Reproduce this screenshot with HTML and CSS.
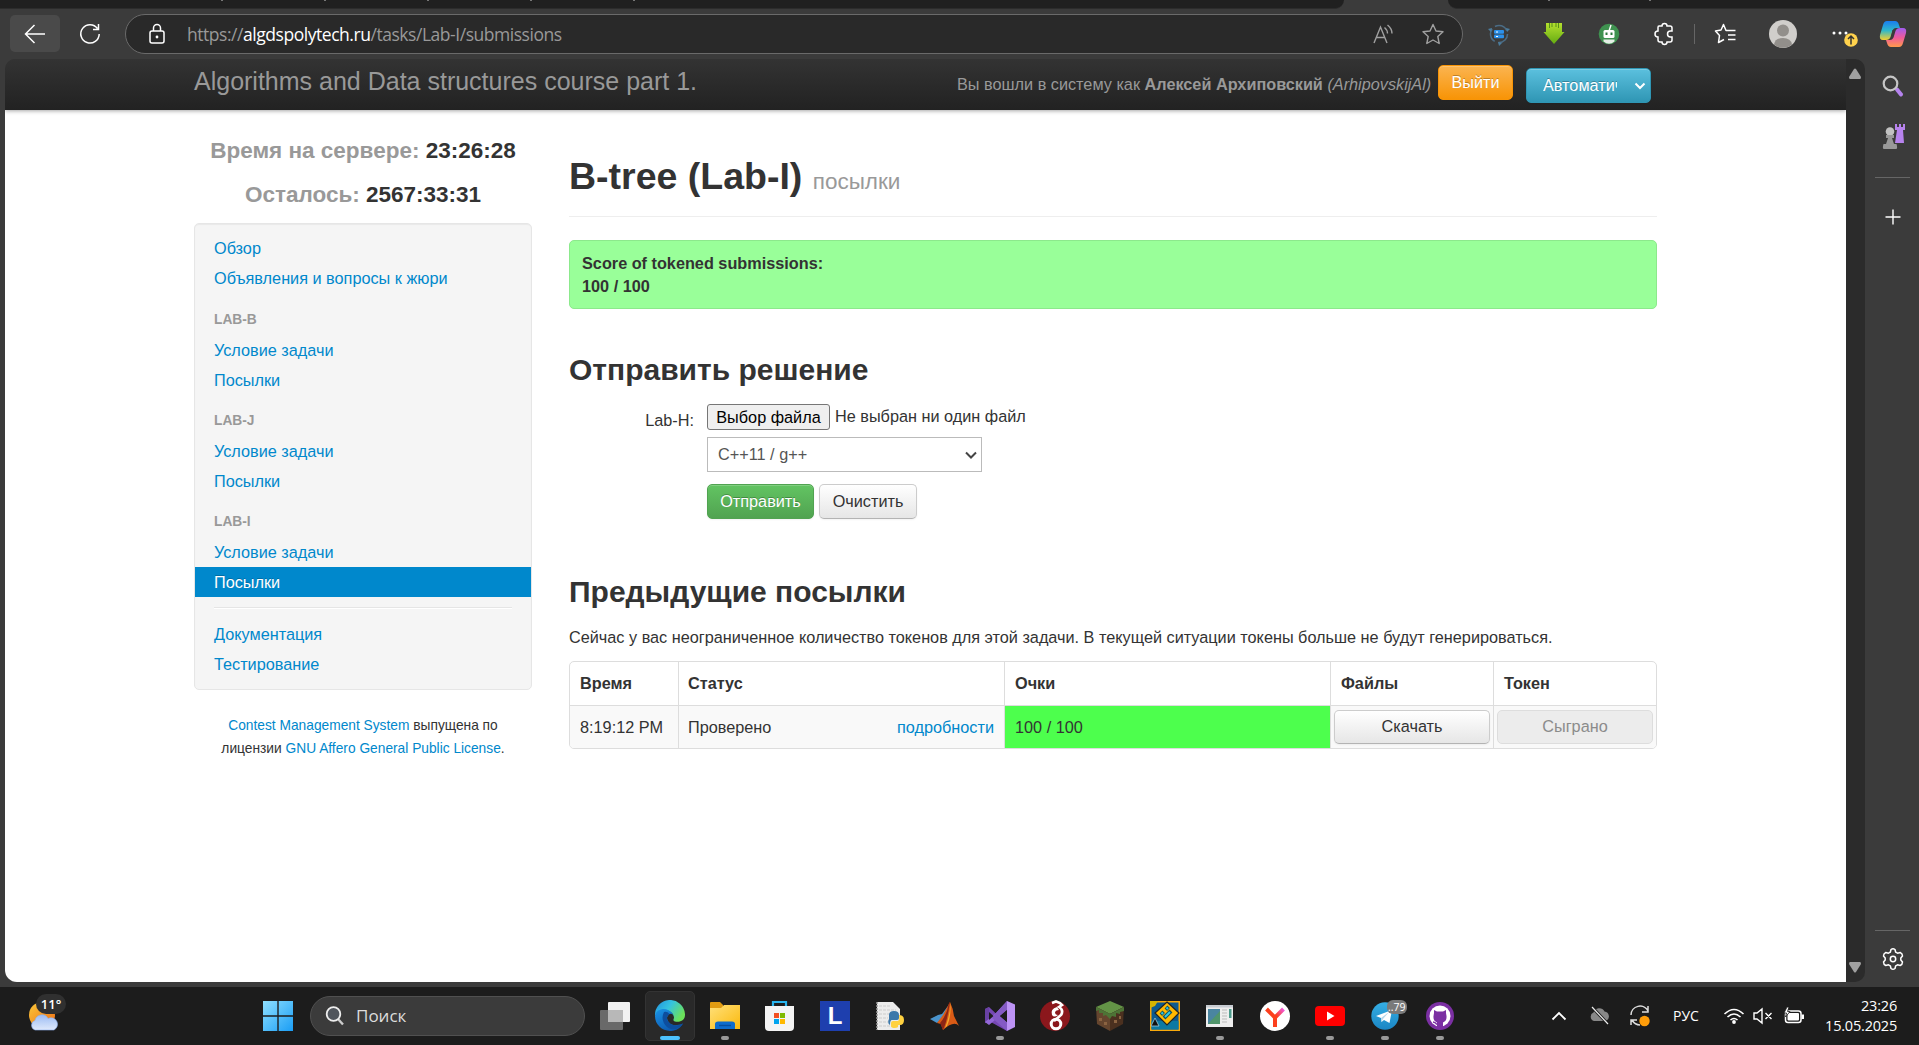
FILE: index.html
```html
<!DOCTYPE html>
<html lang="ru">
<head>
<meta charset="utf-8">
<title>B-tree (Lab-I)</title>
<link rel="stylesheet" href="styles.css">
</head>
<body>
<svg width="0" height="0" class="defs"><defs>
<linearGradient id="gWin" x1="0" y1="0" x2="1" y2="1"><stop offset="0" stop-color="#8fe0ff"/><stop offset="1" stop-color="#1a9df5"/></linearGradient>
<linearGradient id="gEdge" x1="0" y1="0" x2="1" y2=".5"><stop offset="0" stop-color="#1f8fe0"/><stop offset=".5" stop-color="#35c3e0"/><stop offset="1" stop-color="#6be15a"/></linearGradient>
<linearGradient id="gEdgeB" x1="0" y1="0" x2=".6" y2="1"><stop offset="0" stop-color="#1a93e6"/><stop offset="1" stop-color="#0c57ad"/></linearGradient>
<linearGradient id="gFold" x1="0" y1="0" x2="1" y2="1"><stop offset="0" stop-color="#ffe07a"/><stop offset="1" stop-color="#fbb90c"/></linearGradient>
<linearGradient id="gCoA" x1="0" y1="0" x2="0" y2="1"><stop offset="0" stop-color="#1a7df0"/><stop offset=".5" stop-color="#2fb8c9"/><stop offset="1" stop-color="#f5cf2e"/></linearGradient>
<linearGradient id="gCoB" x1="0" y1="0" x2="0" y2="1"><stop offset="0" stop-color="#a05cf0"/><stop offset=".5" stop-color="#ee5a9c"/><stop offset="1" stop-color="#ff9a4a"/></linearGradient>
<linearGradient id="gGreen" x1="0" y1="0" x2="0" y2="1"><stop offset="0" stop-color="#b4e02e"/><stop offset="1" stop-color="#64ab12"/></linearGradient>
<linearGradient id="gSun" x1="0" y1="0" x2="1" y2="1"><stop offset="0" stop-color="#fbc93a"/><stop offset="1" stop-color="#ee6a14"/></linearGradient>
<linearGradient id="gCloud" x1="0" y1="0" x2="0" y2="1"><stop offset="0" stop-color="#9cbcf4"/><stop offset="1" stop-color="#dfe9fb"/></linearGradient>
<linearGradient id="gTg" x1="0" y1="0" x2="0" y2="1"><stop offset="0" stop-color="#35aee4"/><stop offset="1" stop-color="#1b86c4"/></linearGradient>
<linearGradient id="gYa" x1="0" y1="1" x2="1" y2="0"><stop offset="0" stop-color="#fc3f1d"/><stop offset=".6" stop-color="#fc3f1d"/><stop offset="1" stop-color="#f05ae0"/></linearGradient>
</defs></svg>

<div class="tabstrip"><div class="tabs-left"><i></i><i></i><i></i><i></i><i></i></div><div class="tab-active"></div><div class="tabs-right"><i></i><i></i></div></div>

<header class="toolbar">
  <div class="back"><svg width="24" height="24" viewBox="0 0 24 24"><path d="M22 12H2.500M11.500 3L2.500 12L11.500 21" fill="none" stroke="#fff" stroke-width="1.500"/></svg></div>
  <svg class="reload" width="24" height="24" viewBox="0 0 24 24"><path d="M19.500 6.500A9.200 9.200 0 1 0 21.200 12M20.500 2V7.500H15" fill="none" stroke="#fff" stroke-width="1.500"/></svg>
  <div class="address">
    <svg class="lock" width="20" height="22" viewBox="0 0 20 22"><rect x="3" y="8" width="14" height="12" rx="2" fill="none" stroke="#fff" stroke-width="1.500"/><path d="M6.500 8V5a3.500 3.500 0 0 1 7 0V8" fill="none" stroke="#fff" stroke-width="1.500"/><circle cx="10" cy="14" r="1.400" fill="#fff"/></svg>
    <span class="url">https://<b>algdspolytech.ru</b>/tasks/Lab-I/submissions</span>
    <svg class="read" width="24" height="22" viewBox="0 0 24 22"><path d="M2 20L8.500 4L15 20M4.500 14.500H12.500M12.500 4.500Q15.500 7 15.500 10.500M15.500 2Q20 5.500 20 10.500" fill="none" stroke="#a0a0a0" stroke-width="1.400"/></svg>
    <svg class="star" width="24" height="22" viewBox="0 0 24 22"><path d="M12 1.500L15 8L22 8.800L16.800 13.500L18.200 20.500L12 17L5.800 20.500L7.200 13.500L2 8.800L9 8Z" fill="none" stroke="#a0a0a0" stroke-width="1.400" stroke-linejoin="round"/></svg>
  </div>
  <div class="extensions">
    <svg width="24" height="24" viewBox="0 0 24 24"><circle cx="12" cy="12" r="8.500" fill="none" stroke="#4b6c85" stroke-width="1.600" stroke-dasharray="14 3.800"/><path d="M1 7L5 6L4 10ZM23 7L19 6L20 10ZM11 20L15 21L12 24Z" fill="#4b7d9e"/><rect x="7" y="8" width="10" height="3.700" rx="1" fill="#2b91ec"/><rect x="7" y="12.500" width="10" height="3.700" rx="1" fill="#2b91ec"/><path d="M9 10H11M9 14.500H11" stroke="#fff"/></svg>
    <svg width="24" height="24" viewBox="0 0 24 24"><path d="M4 1H20V10H22.500L12 22L1.500 10H4Z" fill="url(#gGreen)"/><path d="M7.500 1V6M10 1V5M14 1V5M16.500 1V6" stroke="#558f18"/></svg>
    <svg width="24" height="24" viewBox="0 0 24 24"><circle cx="12" cy="12" r="10.300" fill="#3f9250"/><path d="M12 9L14 3" stroke="#fff" stroke-width="1.400"/><rect x="6.500" y="8" width="11" height="8" rx="1.500" fill="#fff"/><rect x="8.500" y="10.500" width="2" height="2.500" fill="#2d7b3e"/><rect x="13.500" y="10.500" width="2" height="2.500" fill="#2d7b3e"/><path d="M6.500 17.500H17.500V19.500Q12 24 6.500 19.500Z" fill="#e6eee7"/></svg>
    <svg width="24" height="24" viewBox="0 0 24 24"><path d="M7 4H10A2.500 2.500 0 0 1 15 4H18Q20 4 20 6V9H18.500A2.800 2.800 0 0 0 18.500 15H20V18Q20 20 18 20H15A2.500 2.500 0 0 1 10 20H8Q6 20 6 18V15A3 3 0 0 1 6 9V5.500Q6 4 7 4Z" fill="none" stroke="#fff" stroke-width="1.500"/></svg>
    <i class="sep"></i>
    <svg width="24" height="24" viewBox="0 0 24 24"><path d="M13 8.500H12L9.500 2.500L7 8L1.500 9L5.500 13.500L4.500 20.500L10 17.500M12.500 8.500H21.500M14 13H21.500M14 17.500H21.500" fill="none" stroke="#fff" stroke-width="1.500" stroke-linejoin="round"/></svg>
    <svg class="avatar" width="28" height="28" viewBox="0 0 28 28"><circle cx="14" cy="14" r="14" fill="#d0cecb"/><circle cx="14" cy="10.500" r="6" fill="#928f8b"/><path d="M5 24.500Q6 18 14 18T23 24.500A14 14 0 0 1 5 24.500" fill="#928f8b"/></svg>
    <svg class="more" width="28" height="28" viewBox="0 0 28 28"><circle cx="3" cy="13" r="1.500" fill="#fff"/><circle cx="9" cy="13" r="1.500" fill="#fff"/><circle cx="15" cy="13" r="1.500" fill="#fff"/><circle cx="20" cy="20" r="6.800" fill="#ffd24d"/><path d="M20 24.500V16.500M17 19L20 16L23 19" fill="none" stroke="#333" stroke-width="1.500"/></svg>
    <svg class="copilot" width="28" height="28" viewBox="0 0 28 28"><path d="M8 1H16Q19 1 20 5L21 8H17Q14 8 13 12L11.500 17Q10.500 20 7 20H4Q0 20 1 15L4 5Q5 1 8 1Z" fill="url(#gCoA)"/><path d="M20 27H12Q9 27 8 23L7 20H11Q14 20 15 16L16.500 11Q17.500 8 21 8H24Q28 8 27 13L24 23Q23 27 20 27Z" fill="url(#gCoB)"/><path d="M13.500 10L15.500 10L14 17L12 18Z" fill="#3b3b3b"/></svg>
  </div>
</header>

<div class="window">
  <div class="page">
    <nav class="navbar">
      <span class="brand">Algorithms and Data structures course part 1.</span>
      <span class="login">Вы вошли в систему как <strong>Алексей Архиповский</strong> <em>(ArhipovskijAl)</em></span>
      <a class="btn warning">Выйти</a>
      <span class="btn info"><span>Автоматич</span><svg width="12" height="8" viewBox="0 0 12 8"><path d="M1.500 1.500L6 6L10.500 1.500" fill="none" stroke="#fff" stroke-width="2"/></svg></span>
    </nav>
    <div class="container">
      <aside>
        <p class="clock"><span>Время на сервере:</span> 23:26:28</p>
        <p class="clock"><span>Осталось:</span> 2567:33:31</p>
        <ul class="well">
          <li>Обзор</li><li>Объявления и вопросы к жюри</li>
          <li class="head">LAB-B</li><li>Условие задачи</li><li>Посылки</li>
          <li class="head">LAB-J</li><li>Условие задачи</li><li>Посылки</li>
          <li class="head">LAB-I</li><li>Условие задачи</li><li class="active">Посылки</li>
          <li class="divider"></li>
          <li>Документация</li><li>Тестирование</li>
        </ul>
        <p class="credits"><a>Contest Management System</a> выпущена по<br>лицензии <a>GNU Affero General Public License</a>.</p>
      </aside>
      <main>
        <h1>B-tree (Lab-I) <small>посылки</small></h1>
        <div class="score">Score of tokened submissions:<br>100 / 100</div>
        <h2>Отправить решение</h2>
        <form class="submit">
          <label>Lab-H:</label>
          <div class="fields">
            <div class="file"><span class="choose">Выбор файла</span><span class="none">Не выбран ни один файл</span></div>
            <div class="select"><span>C++11 / g++</span><svg width="12" height="8" viewBox="0 0 12 8"><path d="M1 1.500L6 6.500L11 1.500" fill="none" stroke="#444" stroke-width="2"/></svg></div>
            <div class="actions"><span class="btn success">Отправить</span><span class="btn plain">Очистить</span></div>
          </div>
        </form>
        <h2 class="prev">Предыдущие посылки</h2>
        <p class="tokens">Сейчас у вас неограниченное количество токенов для этой задачи. В текущей ситуации токены больше не будут генерироваться.</p>
        <div class="table">
          <div class="row th"><div>Время</div><div>Статус</div><div>Очки</div><div>Файлы</div><div>Токен</div></div>
          <div class="row td"><div>8:19:12 PM</div><div class="status">Проверено<a>подробности</a></div><div class="full">100 / 100</div><div class="cell-btn"><span class="btn plain">Скачать</span></div><div class="cell-btn"><span class="btn disabled">Сыграно</span></div></div>
        </div>
      </main>
    </div>
  </div>
  <div class="scroll"><svg width="14" height="11" viewBox="0 0 14 11"><path d="M6 1Q7 0 8 1L13 9Q13 11 12 11H2Q1 11 1 9Z" fill="#a0a0a0"/></svg><svg width="14" height="11" viewBox="0 0 14 11"><path d="M6 10Q7 11 8 10L13 2Q13 0 12 0H2Q1 0 1 2Z" fill="#a0a0a0"/></svg></div>
  <div class="rail">
    <svg width="24" height="24" viewBox="0 0 24 24"><path d="M16 15.500L20 20.500" stroke="#b583ee" stroke-width="4" stroke-linecap="round"/><circle cx="9.500" cy="9.500" r="6.800" fill="#3b3b3b" stroke="#c5c5c5" stroke-width="2.200"/></svg>
    <svg class="chess" width="24" height="26" viewBox="0 0 24 26"><path d="M14 0H16V3H18V0H20V3H22V0H24V6H22L23 19H14L16 6H14Z" fill="#b783ee"/><circle cx="9" cy="7.500" r="4.300" fill="#c2c2c2"/><path d="M5 11H13V14H11L13 20H15.500Q17 25 15 25H3Q1 25 2.500 20H5L7 14H5Z" fill="#999"/></svg>
    <i></i>
    <svg class="plus" width="16" height="16" viewBox="0 0 16 16"><path d="M8 .5V15.500M.5 8H15.500" stroke="#fff" stroke-width="1.400"/></svg>
    <i class="low"></i>
    <svg class="gear" width="24" height="24" viewBox="0 0 24 24"><path d="M10 2.500Q12 1 14 2.500L14.700 5.200L16.500 6.200L19.200 5.500Q21.500 6.500 21.500 9L19.800 11V13L21.500 15Q21.500 17.500 19.200 18.500L16.500 17.800L14.700 18.800L14 21.500Q12 23 10 21.500L9.300 18.800L7.500 17.800L4.800 18.500Q2.500 17.500 2.500 15L4.200 13V11L2.500 9Q2.500 6.500 4.800 5.500L7.500 6.200L9.300 5.200Z" fill="none" stroke="#fff" stroke-width="1.500" stroke-linejoin="round"/><circle cx="12" cy="12" r="2.700" fill="none" stroke="#fff" stroke-width="1.500"/></svg>
  </div>
</div>

<footer class="taskbar">
  <div class="weather"><svg width="32" height="32" viewBox="0 0 32 32"><circle cx="14" cy="15" r="13" fill="url(#gSun)"/><path d="M7 30A5 5 0 0 1 7 20.500A7 7 0 0 1 20 18.500A6 6 0 0 1 26 30Z" fill="url(#gCloud)" stroke="#8db0ee" stroke-width=".6"/></svg><b>11°</b></div>
  <svg class="start" width="30" height="30" viewBox="0 0 30 30"><path d="M0 0H14.300V14.300H0ZM15.700 0H30V14.300H15.700ZM0 15.700H14.300V30H0ZM15.700 15.700H30V30H15.700Z" fill="url(#gWin)"/></svg>
  <div class="search"><svg width="20" height="20" viewBox="0 0 20 20"><path d="M13 13L18 18.500" stroke="#ccc" stroke-width="2.400"/><circle cx="8.500" cy="8" r="6.800" fill="#50555c" stroke="#eee" stroke-width="1.800"/></svg>Поиск</div>
  <div class="apps">
    <div><svg width="32" height="32" viewBox="0 0 32 32"><rect x="9" y="2" width="22" height="20" rx="1" fill="#f2f2f2"/><rect x="1" y="10" width="23" height="20" rx="1" fill="#777" fill-opacity=".85"/><rect x="9" y="10" width="15" height="12" fill="#b8b8b8"/></svg></div>
    <div class="on run"><svg width="32" height="32" viewBox="0 0 32 32"><path d="M1 16A15 15 0 0 1 31 14C31.500 21 25 22.500 21 21.500Q18.500 21 20 18C20 13 15 10 10 10Q4 10 1 16Z" fill="url(#gEdge)"/><path d="M1 16C2 9 10 8 14 10Q19 12 20 17Q19 13 15.500 14Q12 16 13.500 20Q16 26 23 25Q27 24.500 29 23.500C25 30 20 31 16 31A15 15 0 0 1 1 16Z" fill="url(#gEdgeB)"/><path d="M10 12Q6 20 13 27Q18 31 24 28Q28 26 29 23.500Q22 27 16.500 24Q10 19 15.500 14Q13 11 10 12Z" fill="#0d4e9e"/></svg></div>
    <div class="run"><svg width="32" height="32" viewBox="0 0 32 32"><path d="M1 3Q1 2 2 2H11L14 5V9H1Z" fill="#e09b12"/><path d="M1 8H12L15 5H31V29H1Z" fill="url(#gFold)"/><path d="M6 29V24Q6 21.500 9 21.500H23Q26 21.500 26 24V29Z" fill="#0d6ccc"/><path d="M10 25.500H22" stroke="#064e9e" stroke-width="1.400"/></svg></div>
    <div><svg width="32" height="32" viewBox="0 0 32 32"><path d="M9 7V2H22V7" fill="none" stroke="#28b4ee" stroke-width="2.200"/><path d="M1 6H30V27Q30 31 26 31H5Q1 31 1 27Z" fill="#f4f4f4"/><path d="M10 13H15V18H10Z" fill="#f25022"/><path d="M16 13H21V18H16Z" fill="#7fba00"/><path d="M10 19H15V24H10Z" fill="#00a4ef"/><path d="M16 19H21V24H16Z" fill="#ffb900"/></svg></div>
    <div class="ltile">L</div>
    <div><svg width="32" height="32" viewBox="0 0 32 32"><path d="M3 2H19L26 9V30H3Z" fill="#ececec"/><path d="M5 6H17M5 10H22M5 14H15M5 18H14M5 22H14M5 26H20" stroke="#ccc" stroke-dasharray="3 1"/><path d="M3 2V30" stroke="#999" stroke-width="1.500" stroke-dasharray="2 1"/><path d="M15 19V15Q15 11 20 11T25 15V18Q25 20 23 20H18Q16 20 16 25Q13 23 15 19Z" fill="#3c78aa"/><path d="M25 15Q30 15 30 20T26 25H24Q25 28 21 28T17 26V23Q17 21 19 21H23Q26 21 25 15Z" fill="#ffd140"/></svg></div>
    <div><svg width="32" height="32" viewBox="0 0 32 32"><path d="M1 19L9 15L13 14L19 6L16 17L8 23Z" fill="#4a94cc"/><path d="M8 23L14 15L21 2Q24 8 25 16L30 26Q25 20 14 30L12 24Z" fill="#d95b16"/><path d="M20 3Q18 15 11 23L14 30Q18 22 21 2Z" fill="#8c2515"/><path d="M21 2Q22 12 16 28L18 26Q23 14 21 2Z" fill="#f4ad2e"/></svg></div>
    <div class="run"><svg width="32" height="32" viewBox="0 0 32 32"><path d="M1 9L5 7L24 25L23 31L5 21L1 23Z" fill="#7548b2"/><path d="M1 9L5 7V24L1 22Z" fill="#6941a3"/><path d="M5 25L1 22L12 13L23 1V10Z" fill="#9468d8"/><path d="M12 13L23 1V10L16 16L23 22V31L8 18Z" fill="#845ac4"/><path d="M5 12V20L9.500 16Z" fill="#1c1c1c"/><path d="M23 10V22L16 16Z" fill="#1c1c1c"/><path d="M23 1L31 4.500V27L23 31Z" fill="#bd93f5"/></svg></div>
    <div><svg width="32" height="32" viewBox="0 0 32 32"><circle cx="16" cy="16" r="15" fill="#8b171c"/><circle cx="17" cy="24" r="4.800" fill="none" stroke="#fff" stroke-width="3"/><path d="M13 3L17 1.500L21 3L23 5L20 7Q25 10 22 15L15 21" fill="none" stroke="#fff" stroke-width="2.600"/><path d="M18 7Q11 9 13 15Q15 18 19 15Q16 15 16 12Q17 10 20 10Z" fill="#fff"/></svg></div>
    <div><svg width="32" height="32" viewBox="0 0 32 32"><path d="M16 1L30 7L16 14L2 7Z" fill="#639346"/><path d="M2 7L16 14V31L3 24Z" fill="#65452e"/><path d="M30 7L16 14V31L29 24Z" fill="#4b301f"/><path d="M2 7L16 14L30 7V11L26 12V14L22 13V17L18 16L16 19L12 15L9 16V13L5 13V10L2 11Z" fill="#4d7436"/><path d="M5 18h3v3H5M10 22h3v3h-3M20 20h3v3h-3M25 16h2v3h-2" fill="#8b6341"/></svg></div>
    <div><svg width="32" height="32" viewBox="0 0 32 32"><path d="M1 1H31V31H1Z" fill="#f9a90b"/><path d="M2.500 2.500H29.500V29.500H2.500Z" fill="#0e5b8e"/><path d="M2.500 21H29.500V29.500H2.500Z" fill="#0d79a3"/><path d="M1 1H9L6 6L1 8Z" fill="#d6b400"/><path d="M18 2L30 13L18 25L6 13Z" fill="#ffb900" stroke="#222" stroke-width="1.200"/><path d="M12 12L14.500 14.500M17 7L19.500 9.500M15 18L22 11" stroke="#16505e" stroke-width="4"/><path d="M12.500 12.500L14 14M17.500 7.500L19 9M16 17L21 12" stroke="#2ac8e6" stroke-width="2"/><path d="M2 26L6 18L10 26Z" fill="#111" stroke="#9ccbe0" stroke-width=".8"/></svg></div>
    <div class="run"><svg width="32" height="32" viewBox="0 0 32 32"><path d="M2 5H29V27H2Z" fill="#eee"/><path d="M2 5H29V7.500H2Z" fill="#c8ccd2"/><path d="M4 9H16V24H4Z" fill="#4a85a0"/><path d="M16 11V24H4Z" fill="#50956b"/><path d="M18 10H23M18 13H23M18 16H23M18 19H23M18 22H23" stroke="#bbb"/><path d="M25 9H27.500V18H25Z" fill="#4c9c8c"/></svg></div>
    <div><svg width="32" height="32" viewBox="0 0 32 32"><circle cx="16" cy="16" r="15" fill="#fff"/><path d="M7.500 9L16 17.500V27M24.500 9L16 17.500" fill="none" stroke="url(#gYa)" stroke-width="4"/></svg></div>
    <div class="run"><svg width="32" height="32" viewBox="0 0 32 32"><rect x="1" y="6" width="30" height="20" rx="4" fill="#f00"/><path d="M13 11.500L20.500 16L13 20.500Z" fill="#fff"/></svg></div>
    <div class="run tg"><svg width="32" height="32" viewBox="0 0 32 32"><circle cx="16" cy="16" r="13.700" fill="url(#gTg)"/><path d="M7 16L23 10L20.500 23L15 20L12.500 22L12 18Z" fill="#fff"/><path d="M12 18L20 12L14 19L12.500 22Z" fill="#b8d7ea"/></svg><b>..79</b></div>
    <div class="run"><svg width="32" height="32" viewBox="0 0 32 32"><circle cx="16" cy="16" r="14" fill="#7b2fa3"/><circle cx="16" cy="16" r="10.500" fill="#fff"/><path d="M13 27V22.500Q9 21 9.500 16L10 13L10 10L13 11.500H19L22 10V13L22.500 16Q23 21 19 22.500V27Z" fill="#7b2fa3"/><path d="M9 22Q11 22 13 24.500" stroke="#7b2fa3" stroke-width="1.400" fill="none"/></svg></div>
  </div>
  <div class="tray">
    <svg width="16" height="10" viewBox="0 0 16 10"><path d="M1.500 8.500L8 2L14.500 8.500" fill="none" stroke="#fff" stroke-width="1.800"/></svg>
    <svg class="cloud" width="22" height="20" viewBox="0 0 22 20"><path d="M5 15A4.500 4.500 0 0 1 4.500 6.500A6 6 0 0 1 15.500 5.500A5 5 0 0 1 17 15Z" fill="#888"/><path d="M3 1L19 18" stroke="#1c1c1c" stroke-width="3"/><path d="M3 1L19 18" stroke="#eee" stroke-width="1.200"/></svg>
    <svg class="sync" width="22" height="22" viewBox="0 0 22 22"><path d="M2 10A9 9 0 0 1 19 6M19 1V7H13M2 20V15H8M3 15Q6 20 11 20" fill="none" stroke="#ddd" stroke-width="1.500"/><circle cx="15.500" cy="16" r="5.200" fill="#ff9d0a"/></svg>
    <span class="lang">РУС</span>
    <svg class="wifi" width="22" height="18" viewBox="0 0 22 18"><path d="M1.500 7Q11-2 20.500 7M4.500 10Q11 4 17.500 10M7.500 13Q11 10 14.500 13" fill="none" stroke="#fff" stroke-width="1.600"/><circle cx="11" cy="15" r="1.900" fill="#fff"/></svg>
    <svg class="vol" width="20" height="18" viewBox="0 0 20 18"><path d="M1 6H4L9 2V16L4 12H1ZM12.500 6L18.500 12M18.500 6L12.500 12" fill="none" stroke="#fff" stroke-width="1.400"/></svg>
    <svg class="bat" width="22" height="18" viewBox="0 0 22 18"><rect x="2.500" y="4" width="15.500" height="11.500" rx="2.500" fill="none" stroke="#fff" stroke-width="1.500"/><rect x="4.500" y="6" width="11.500" height="7.500" rx="1" fill="#fff"/><path d="M18.500 7.500H21V12H18.500Z" fill="#fff"/><path d="M4 0L1 6H3.500L2.500 10L7 4.500H4.500L6 0Z" fill="#fff" stroke="#1c1c1c" stroke-width=".8"/></svg>
    <div class="time">23:26<br>15.05.2025</div>
  </div>
</footer>
</body>
</html>
```
FILE: styles.css
```css
* { box-sizing: border-box; }
body { margin: 0; width: 1919px; height: 1045px; overflow: hidden; display: flex; flex-direction: column; background: #3b3b3b; font: 16.25px/22.5px "Liberation Sans", Arial, sans-serif; color: #333; }
svg { display: block; flex: none; }
.defs { position: absolute; }
a, li { color: #08c; text-decoration: none; }

.tabstrip { flex: none; height: 9px; display: flex; background: #3b3b3b; }
.tabs-left, .tabs-right { background: #202020; border-bottom: 1px solid #2c2c2c; display: flex; }
.tabs-left { width: 1344px; border-bottom-right-radius: 9px; padding-left: 221px; gap: 101px; }
.tab-active { width: 104px; }
.tabs-right { flex: 1; border-bottom-left-radius: 9px; padding-left: 100px; gap: 99px; }
.tabstrip i { width: 2px; height: 1px; background: #777; }

.toolbar { flex: none; height: 50px; display: flex; align-items: center; }
.back { width: 50px; height: 37px; margin-left: 10px; margin-top: -1px; border-radius: 5px; background: #4a4a4a; display: flex; align-items: center; justify-content: center; }
.reload { margin-left: 18px; }
.address { width: 1338px; height: 40px; margin: 0 0 0 23px; border: 1px solid #6a6a6a; border-radius: 20px; background: #292929; display: flex; align-items: center; }
.lock { margin-left: 21px; }
.url { width: 1165px; margin-left: 20px; font: 17.5px/24px "Open Sans", "Noto Sans", sans-serif; letter-spacing: -.46px; color: #999; white-space: nowrap; }
.url b { color: #fff; font-weight: 400; }
.read { margin-left: 20px; }
.star { margin-left: 25px; }
.extensions { flex: 1; display: flex; align-items: center; padding-left: 24px; gap: 31px; }
.sep { width: 1px; height: 20px; background: #666; margin: 0 -12px 0 -13px; }
.avatar { margin-left: 0; }
.more { margin-left: 3px; }
.copilot { margin-left: -11px; }

.window { flex: 1; min-height: 0; padding: 0 0 5px 5px; display: flex; }
.page { width: 1841px; background: linear-gradient(#333 50px, #fff 50px); border-radius: 10px 0 0 12px; overflow: hidden; }
.navbar { height: 51px; padding-left: 189px; display: flex; align-items: flex-start; background: linear-gradient(#333, #222); box-shadow: 0 1px 4px rgba(0,0,0,.35); color: #999; }
.brand { width: 763px; font-size: 25px; line-height: 25px; padding-top: 10px; white-space: nowrap; }
.login { width: 481px; padding-top: 14px; white-space: nowrap; }
.btn { display: flex; align-items: center; justify-content: center; height: 35px; border: 1px solid #ccc; border-radius: 5px; border-bottom-color: #b3b3b3; box-shadow: inset 0 1px 0 rgba(255,255,255,.2), 0 1px 2px rgba(0,0,0,.05); white-space: nowrap; }
.warning { width: 75px; margin-top: 6px; color: #fff; background: linear-gradient(#fbb450, #f89406); border-color: #f89406; text-shadow: 0 -1px 0 rgba(0,0,0,.25); }
.info { width: 125px; margin: 9px 0 0 13px; padding: 0 4px 0 16px; justify-content: space-between; color: #fff; background: linear-gradient(#5bc0de, #2f96b4); border-color: #2f96b4; text-shadow: 0 -1px 0 rgba(0,0,0,.25); }
.info span { width: 74px; overflow: hidden; }

.container { width: 1463px; margin-left: 189px; display: grid; grid-template-columns: 338px 1088px; gap: 37px; }
aside { padding-top: 19px; }
.clock { margin: 0; height: 44px; line-height: 44px; font-size: 22.5px; font-weight: bold; text-align: center; }
.clock span { color: #999; }
.well { list-style: none; margin: 6px 0 0; padding: 9px 0 10px; background: #f5f5f5; border: 1px solid #e6e6e6; border-radius: 5px; box-shadow: inset 0 1px 1px rgba(0,0,0,.05); }
.well li { height: 30px; padding: 0 19px; line-height: 30px; }
.well .head { height: 41px; padding-top: 11px; color: #999; font-size: 13.75px; font-weight: bold; }
.well li:nth-child(2) { height: 31px; }
.well .active { background: #08c; color: #fff; text-shadow: 0 -1px 0 rgba(0,0,0,.2); }
.well .divider { height: 2px; margin: 10px 19px; background: #e5e5e5; border-bottom: 1px solid #fff; padding: 0; }
.credits { margin: 25px 0 0; font-size: 13.75px; text-align: center; }

main { padding-top: 42px; padding-left: 0; }
h1 { margin: 0; height: 65px; padding-top: 2px; border-bottom: 1px solid #eee; font-size: 37.5px; line-height: 45px; }
h1 small { font-size: 18px; letter-spacing: 0; font-weight: 400; color: #999; font-size: 18.75px; }
h1 small { font-size: 22.5px; font-size-adjust: none; }
.score { margin-top: 23px; height: 69px; padding: 11px 12px; background: #9f9; border: 1px solid #8ce98c; border-radius: 5px; font-weight: bold; }
h2 { margin: 38px 0 0; font-size: 30px; line-height: 45px; }
.submit { display: flex; margin-top: 12px; }
.submit label { width: 125px; padding-top: 5px; text-align: right; }
.fields { margin-left: 13px; }
.file { display: flex; height: 26px; gap: 5px; }
.none { padding-top: 1px; }
.choose { width: 123px; height: 26px; line-height: 24px; border: 1px solid #767676; border-radius: 3px; background: #efefef; color: #000; text-align: center; }
.select { width: 275px; height: 35px; margin-top: 7px; padding: 0 4px 0 10px; border: 1px solid #bbb; color: #555; display: flex; align-items: center; justify-content: space-between; }
.actions { display: flex; gap: 5px; margin-top: 12px; }
.success { width: 107px; color: #fff; background: linear-gradient(#62c462, #51a351); border-color: #51a351; text-shadow: 0 -1px 0 rgba(0,0,0,.25); }
.plain { width: 98px; background: linear-gradient(#fff, #e6e6e6); }
.prev { margin-top: 50px; }
.tokens { margin: 12px 0 12px; white-space: nowrap; }
.table { border: 1px solid #ddd; border-radius: 5px; overflow: hidden; }
.row { display: grid; grid-template-columns: 108px 326px 326px 163px 163px; height: 43px; line-height: 43px; }
.row > div { padding-left: 10px; border-left: 1px solid #ddd; }
.row > div:first-child { border-left: 0; }
.row > div:nth-child(2) { padding-left: 9px; }
.th { font-weight: bold; }
.td { height: 43px; background: #f9f9f9; border-top: 1px solid #ddd; }
.status { display: flex; justify-content: space-between; padding-right: 10px; }
.td .full { background: #4dff4d; }
.td .cell-btn { padding: 4px 3px; }
.cell-btn .btn { width: 100%; height: 34px; }
.disabled { background: #ececec; color: #8b8b8b; border-color: #ddd; box-shadow: none; }

.scroll { width: 19px; background: #2b2b2b; border-radius: 0 10px 10px 0; padding: 9px 0 9px 2px; display: flex; flex-direction: column; justify-content: space-between; }
.rail { flex: 1; display: flex; flex-direction: column; align-items: center; padding: 15px 0 0 1px; }
.rail i { width: 35px; height: 1px; background: #666; margin-top: 27px; }
.chess { margin-top: 26px; }
.plus { margin-top: 31px; }
.rail .low { margin-top: auto; }
.gear { margin: 16px 0 11px; }

.taskbar { flex: none; height: 58px; display: flex; align-items: center; background: #1c1c1c; color: #fff; font-family: "Open Sans", "Noto Sans", sans-serif; }
.weather { position: relative; width: 263px; height: 32px; padding-left: 28px; }
.weather b { position: absolute; left: 36px; top: -6px; width: 30px; height: 20px; border-radius: 10px; background: #303030; font-size: 13px; line-height: 20px; font-weight: 600; text-align: center; }
.search { width: 275px; height: 40px; margin-left: 17px; border: 1px solid #505050; border-radius: 20px; background: #3b3b3b; display: flex; align-items: center; gap: 11px; padding-left: 14px; font-size: 17px; color: #ddd; }
.apps { display: flex; margin-left: 5px; gap: 5px; }
.apps div { position: relative; width: 50px; height: 50px; border-radius: 5px; display: flex; align-items: center; justify-content: center; }
.apps .on { background: #292929; border: 1px solid #333; }
.run::after { content: ""; position: absolute; bottom: 1px; left: 21px; width: 8px; height: 4px; border-radius: 2px; background: #999; }
.on.run::after { left: 14px; bottom: 0; width: 20px; background: #4cc2ff; }
.apps .ltile { width: 30px; height: 30px; margin: 10px; border-radius: 0; background: #1e3fae; font: bold 24px/30px "Liberation Sans", Arial, sans-serif; }
.tg b { position: absolute; left: 27px; top: 9px; padding: 0 1px; border-radius: 6px; background: #7a7a7a; font-size: 10.5px; line-height: 14px; font-weight: 400; }
.tray { margin-left: auto; display: flex; align-items: center; padding-right: 22px; }
.cloud { margin-left: 22px; }
.sync { margin-left: 18px; }
.lang { width: 30px; margin-left: 22px; font-size: 14px; }
.wifi { margin-left: 20px; }
.vol { margin-left: 8px; }
.bat { margin-left: 10px; }
.time { width: 92px; font-size: 14.5px; line-height: 20px; text-align: right; letter-spacing: -.2px; }
```
